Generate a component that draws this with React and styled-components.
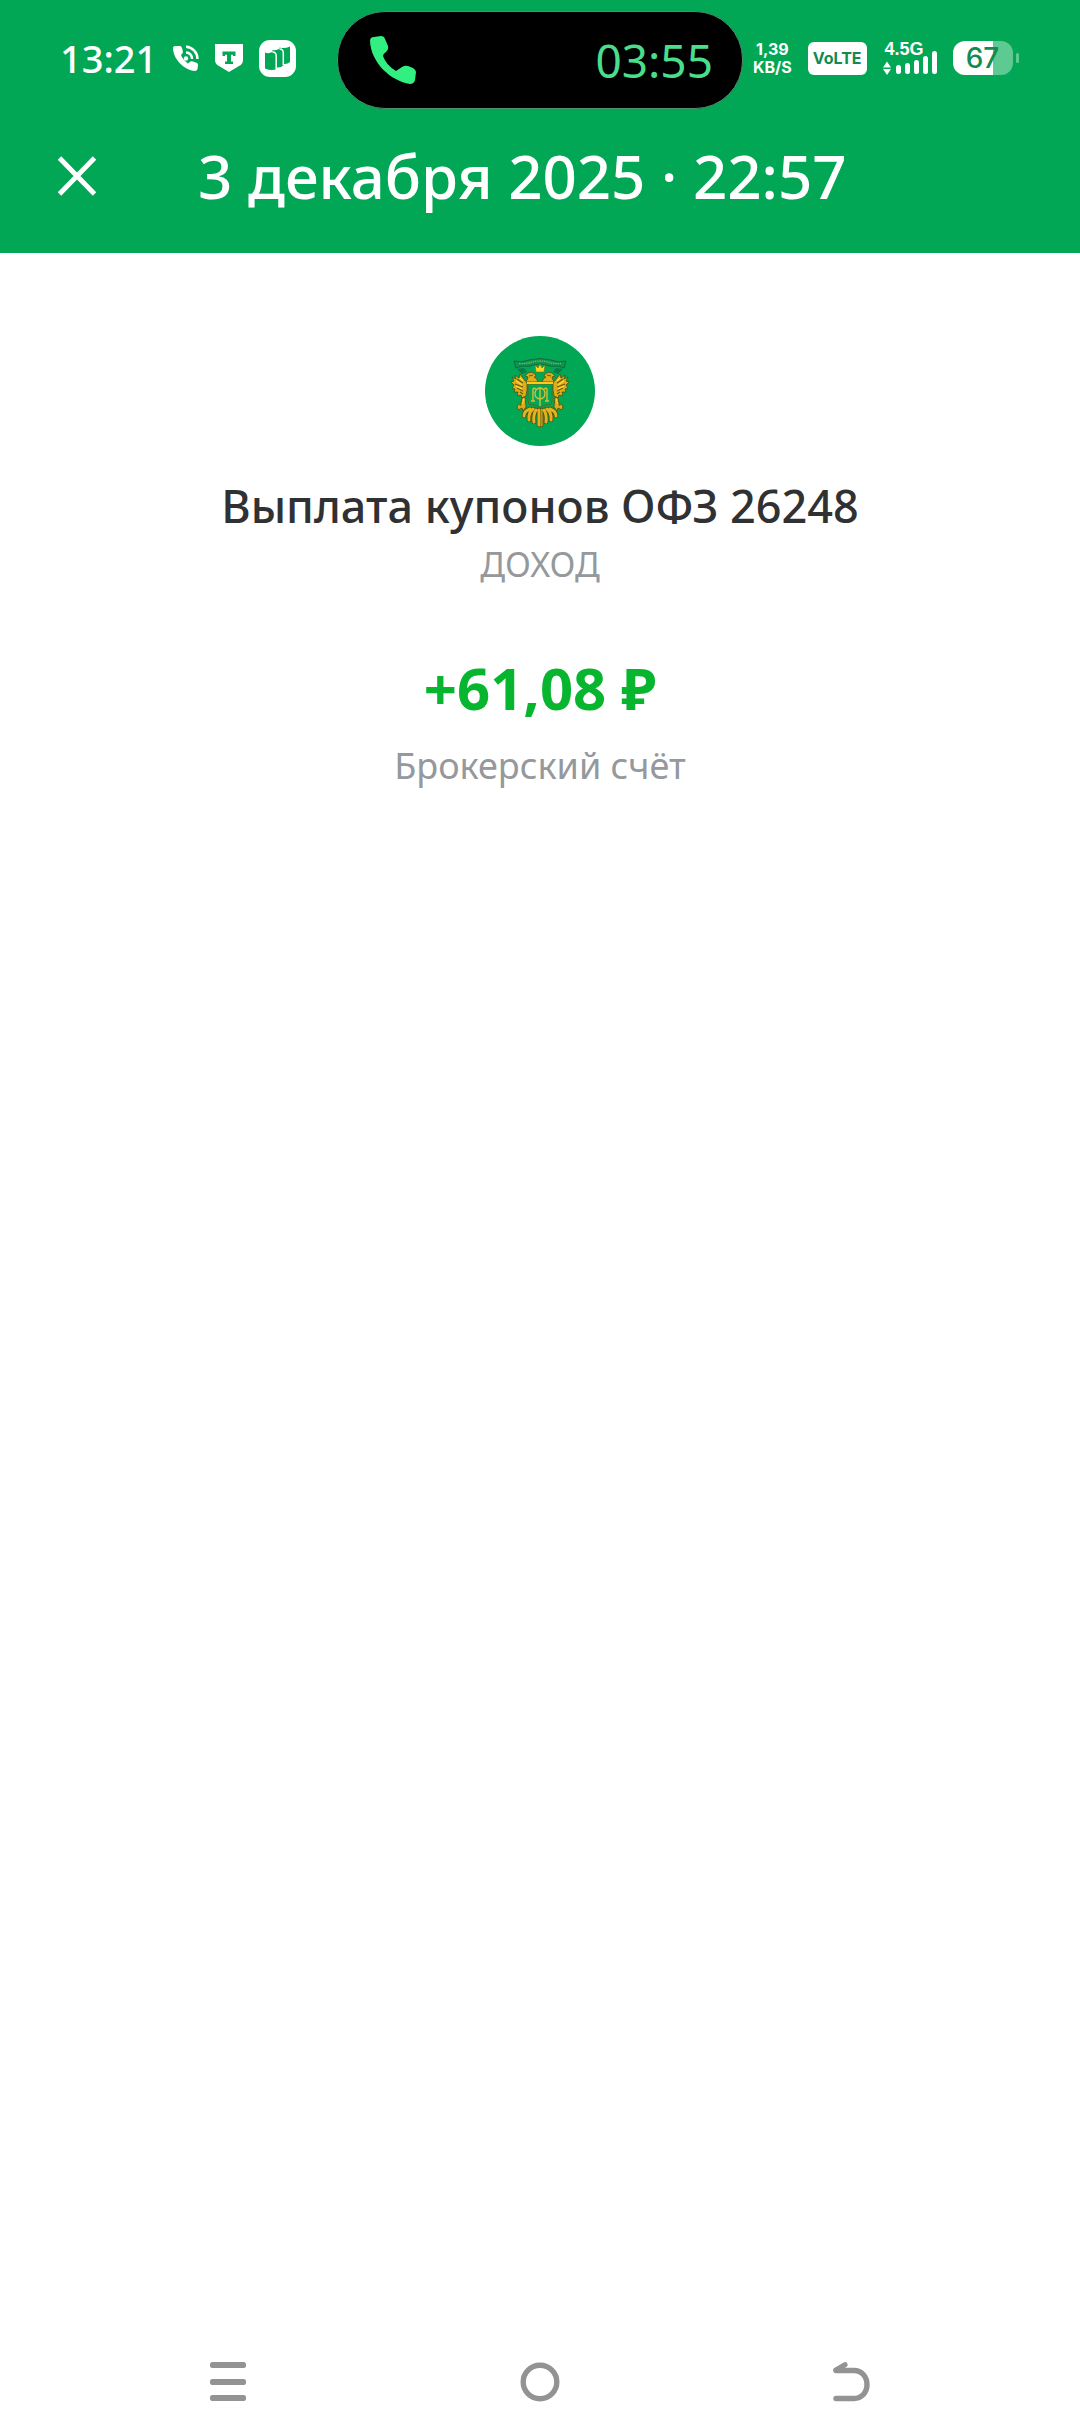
import styled, { createGlobalStyle } from 'styled-components';

const GlobalStyle = createGlobalStyle`
  body {
    margin: 0;
    background: #ffffff;
    font-family: 'Noto Sans', sans-serif;
  }
`;

const StatusCallIcon = () => (
  <svg width="26" height="27" viewBox="0 0 26 27" fill="none" aria-hidden="true">
    <path
      d="M0 3Q0 1 2 1L7 1Q8.500 1 9 3L10 7Q10 8 8 10Q9.500 14.500 15 18.500L17.500 16.500Q18.500 16 20 16.500L24 18Q25 18.500 25 20L24.500 24Q24 26 22 26C11 25 0 14 0 3Z"
      fill="#fff"
    />
    <circle cx="13" cy="13.500" r="2.200" fill="#fff" />
    <path d="M13 7.500A6 6 0 0 1 19 14M13 1.800A12 12 0 0 1 24.500 14" stroke="#fff" strokeWidth="2.400" />
  </svg>
);

const ShieldIcon = () => (
  <svg width="28" height="28" viewBox="0 0 28 28" aria-hidden="true">
    <path d="M0 0H28V16Q28 20 24 22L14 28L4 22Q0 20 0 16Z" fill="#fff" />
    <path d="M7.500 7.500H20.500V12H18V10.800H16V17.500H18V20H10V17.500H12V10.800H10V12H7.500Z" fill="#02a755" />
  </svg>
);

const AppBadgeIcon = () => (
  <svg width="37" height="37" viewBox="0 0 37 37" aria-hidden="true">
    <rect width="37" height="37" rx="11" fill="#fff" />
    <path
      d="M6 12.500Q9.500 14 13.500 12V10Q17.500 11 20.500 8.500V7.500Q25.500 9 31 6.500V22Q28 24.500 25 24V25Q21.500 28 18 27.500V28.500Q13.500 31.500 6 28.500Z"
      fill="#02a755"
    />
    <path
      d="M13.500 12Q17.200 12 17.200 16V29M20.500 9Q24.300 9 24.300 13V25.500"
      fill="none"
      stroke="#fff"
      strokeWidth="1.500"
    />
  </svg>
);

const PhoneIcon = () => (
  <svg width="46" height="48" viewBox="0 0 46 48" fill="#32ef82" aria-hidden="true">
    <path d="M0 5Q0 1 4 1L11 0Q14 0 15 3L18 10Q19 13 16 16Q13 18 13 20Q16 29 26 35L32 31Q35 29 38 30L43 32Q46 34 46 36L45 44Q44 48 40 48C21 45 1 27 0 5Z" />
  </svg>
);

const SignalIcon = () => (
  <svg width="54" height="24" viewBox="0 0 54 24" fill="#fff" aria-hidden="true">
    <path d="M0 16.500L4 10.500L8 16.500ZM0 18L4 24L8 18Z" />
    <rect x="13" y="14" width="5" height="9" rx="2.500" />
    <rect x="22" y="12" width="5" height="11" rx="2.500" />
    <rect x="31" y="9" width="5" height="14" rx="2.500" />
    <rect x="40" y="5" width="5" height="18" rx="2.500" />
    <rect x="49" y="0" width="5" height="23" rx="2.500" />
  </svg>
);

const CloseIcon = () => (
  <svg width="38" height="40" viewBox="0 0 38 40" fill="none" aria-hidden="true">
    <path d="M1.500 2L36.500 38M36.500 2L1.500 38" stroke="#fff" strokeWidth="4.800" />
  </svg>
);

const MenuIcon = () => (
  <svg width="38" height="40" viewBox="0 0 38 40" fill="#939393" aria-hidden="true">
    <rect width="36" height="6" rx="2.500" />
    <rect y="17" width="36" height="6" rx="2.500" />
    <rect y="33" width="36" height="6" rx="2.500" />
  </svg>
);

const HomeIcon = () => (
  <svg width="40" height="40" viewBox="0 0 40 40" fill="none" aria-hidden="true">
    <circle cx="20" cy="20" r="16.800" stroke="#939393" strokeWidth="5.400" />
  </svg>
);

const BackIcon = () => (
  <svg width="38" height="40" viewBox="0 0 38 40" fill="none" stroke="#939393" aria-hidden="true">
    <path d="M4 8.500H22C29.500 8.500 35 14.500 35 22.500S29.500 36.500 22 36.500H4" strokeWidth="5.400" strokeLinecap="round" />
    <path d="M4 8L13 2.800" strokeWidth="5.200" strokeLinecap="round" />
  </svg>
);

// right half of the eagle, mirrored for the left one
const EagleHalf = () => (
  <>
    <g stroke="#4d5214" strokeWidth="0.800" fill="#dfac1a">
      <path d="M2 22Q3 18 6 17Q3 17 5 14Q8 11 12 13L15 16L12 17Q12 20 15 22Z" />
      <path d="M13 23L17 18L20 14L21 18L25 15L24 19L28 17L26 21L29 22L26 25L28 28L25 29L26 32L22 32L23 36L19 35L18 38L14 36L13 30Z" />
      <path d="M15 37L18 38L19 43L23 46L22 50L18 48L17 51L14 47Z" />
    </g>
    <g stroke="#4d5214" strokeWidth="4.600" strokeLinecap="round" fill="none">
      <path d="M1 50V65M4 50Q7 55 6 62M7 49Q12 53 11 60M10 49Q16 51 16 56" />
    </g>
    <g stroke="#e3b31e" strokeWidth="3" strokeLinecap="round" fill="none">
      <path d="M1 50V65M4 50Q7 55 6 62M7 49Q12 53 11 60M10 49Q16 51 16 56" />
    </g>
    <path
      d="M17 23L23 19M17 27L25 24M17 31L23 28M17 34L20 32M17 41L20 46M7 15L11 16"
      stroke="#66570f"
      strokeWidth="1.100"
      fill="none"
    />
    <path
      d="M17 21L20 18M18 25L24 21M18 29L24 26M16 39L18 44"
      stroke="#ffdf3c"
      strokeWidth="1.100"
      fill="none"
    />
  </>
);

const EmblemIcon = () => (
  <svg width="110" height="110" viewBox="0 0 110 110" aria-hidden="true">
    <circle cx="55" cy="55" r="55" fill="#02a755" />
    <g transform="translate(55 24)">
      <EagleHalf />
      <g transform="scale(-1 1)">
        <EagleHalf />
      </g>
      <path
        d="M-26 1Q-18 3 -11 0Q0 -3 11 0Q18 3 26 1L24 8L18 6Q10 7 6 5Q0 3 -6 5Q-10 7 -18 6L-24 8Z"
        fill="#12934f"
        stroke="#08683d"
        strokeWidth="0.900"
      />
      <path d="M-21 3.500Q-13 4 -8 2Q0 0 8 2Q13 4 21 3.500" fill="none" stroke="#6fb45b" strokeWidth="1.300" strokeDasharray="1.500 0.800" />
      <path d="M-23 9L-16 8L-13 12L-18 14ZM23 9L16 8L13 12L18 14Z" fill="#0a7a48" />
      <path d="M-5 5L-2 8L0 4L2 8L5 5L4 12H-4Z" fill="#ffd51d" stroke="#7b6b15" strokeWidth="0.600" />
      <path d="M-12 24H12V41Q12 45 8 45H4L0 48L-4 45H-8Q-12 45 -12 41Z" fill="#04a556" stroke="#5d6c1a" strokeWidth="1" />
      <path d="M-13 23H13" stroke="#ffc81b" strokeWidth="2" />
      <path
        d="M-7 41V30Q-7 27 -4 29M7 41V30Q7 27 4 29M0 27V46M-4 30Q0 26 4 30Q6 34 4 37Q0 41 -4 37Q-6 34 -4 30ZM-9 41H-5M9 41H5"
        fill="none"
        stroke="#cfc136"
        strokeWidth="1.400"
      />
    </g>
  </svg>
);

export default function App() {
  return (
    <Screen>
      <GlobalStyle />
      <Header>
        <StatusBar>
          <StatusLeft>
            <Clock>13:21</Clock>
            <StatusCallIcon />
            <ShieldIcon />
            <AppBadgeIcon />
          </StatusLeft>
          <CallPill>
            <PhoneIcon />
            <span>03:55</span>
          </CallPill>
          <StatusRight>
            <Speed>
              <span>1,39</span>
              <span>KB/S</span>
            </Speed>
            <VolteTag>VoLTE</VolteTag>
            <Network>
              <NetworkName>4.5G</NetworkName>
              <SignalIcon />
            </Network>
            <Battery>
              <BatteryBody>67</BatteryBody>
              <BatteryTip />
            </Battery>
          </StatusRight>
        </StatusBar>
        <TitleBar>
          <IconButton aria-label="Закрыть">
            <CloseIcon />
          </IconButton>
          <Title>3 декабря 2025 · 22:57</Title>
        </TitleBar>
      </Header>
      <Details>
        <EmblemIcon />
        <Name>Выплата купонов ОФЗ 26248</Name>
        <Caption>ДОХОД</Caption>
        <Amount>+61,08 ₽</Amount>
        <Caption $large>Брокерский счёт</Caption>
      </Details>
      <NavBar>
        <IconButton aria-label="Недавние">
          <MenuIcon />
        </IconButton>
        <IconButton aria-label="Домой">
          <HomeIcon />
        </IconButton>
        <IconButton aria-label="Назад">
          <BackIcon />
        </IconButton>
      </NavBar>
    </Screen>
  );
}

const Screen = styled.div`
  display: flex;
  flex-direction: column;
  min-height: 100vh;
`;

const Header = styled.header`
  background: #02a755;
  color: #ffffff;
`;

const StatusBar = styled.div`
  display: grid;
  grid-template-columns: 1fr 406px 1fr;
  align-items: center;
  height: 120px;
`;

const StatusLeft = styled.div`
  display: flex;
  align-items: center;
  gap: 16px;
  padding: 0 0 4px 60px;
`;

const Clock = styled.span`
  font-size: 38px;
  line-height: 40px;
  font-weight: 500;
`;

const CallPill = styled.div`
  display: flex;
  align-items: center;
  justify-content: space-between;
  box-sizing: border-box;
  height: 98px;
  padding: 0 29px 0 32px;
  border: 1px solid #4e8f6c;
  border-radius: 48px;
  background: #000000;
  color: #4add8c;
  font-size: 46px;
  line-height: 48px;
`;

const StatusRight = styled.div`
  display: flex;
  align-items: center;
  gap: 16px;
  padding: 0 0 4px 10px;
`;

const Speed = styled.div`
  display: flex;
  flex-direction: column;
  align-items: center;
  font-family: Inter, sans-serif;
  font-size: 16px;
  line-height: 18px;
  font-weight: 700;
`;

const VolteTag = styled.span`
  padding: 0 5px;
  border-radius: 6px;
  background: #ffffff;
  color: #148a50;
  font-family: Inter, sans-serif;
  font-size: 16px;
  line-height: 33px;
  font-weight: 700;
`;

const Network = styled.div`
  display: flex;
  flex-direction: column;
`;

const NetworkName = styled.span`
  height: 9px;
  padding-left: 2px;
  font-family: 'Liberation Sans', sans-serif;
  font-size: 18px;
  line-height: 14px;
  font-weight: 700;
`;

const Battery = styled.div`
  display: flex;
  align-items: center;
  gap: 3px;
`;

const BatteryBody = styled.span`
  width: 60px;
  border-radius: 12px;
  background: linear-gradient(to right, #ffffff 67%, #5dca91 67%);
  color: #148a50;
  font-family: Inter, sans-serif;
  font-size: 28px;
  line-height: 34px;
  font-weight: 500;
  text-align: center;
`;

const BatteryTip = styled.span`
  width: 3px;
  height: 10px;
  border-radius: 2px;
  background: #5dca91;
`;

const TitleBar = styled.div`
  display: flex;
  align-items: center;
  gap: 102px;
  height: 112px;
  padding: 0 58px 21px;
`;

const IconButton = styled.button`
  display: flex;
  padding: 0;
  border: 0;
  background: none;
  cursor: pointer;
`;

const Title = styled.h1`
  margin: 0;
  font-size: 60px;
  line-height: 72px;
  font-weight: 500;
`;

const Details = styled.main`
  display: flex;
  flex: 1;
  flex-direction: column;
  align-items: center;
  padding-top: 83px;
`;

const Name = styled.h2`
  margin: 30px 0 0;
  color: #303133;
  font-size: 45px;
  line-height: 60px;
  font-weight: 500;
`;

const Caption = styled.p`
  margin: 0;
  color: #95989c;
  font-size: ${({ $large }) => ($large ? '36px' : '34px')};
  line-height: 56px;
`;

const Amount = styled.p`
  margin: 60px 0 14px;
  color: #08b52e;
  font-size: 58px;
  line-height: 72px;
  font-weight: 700;
`;

const NavBar = styled.nav`
  display: flex;
  align-items: center;
  justify-content: space-between;
  height: 108px;
  padding: 0 210px;
`;
